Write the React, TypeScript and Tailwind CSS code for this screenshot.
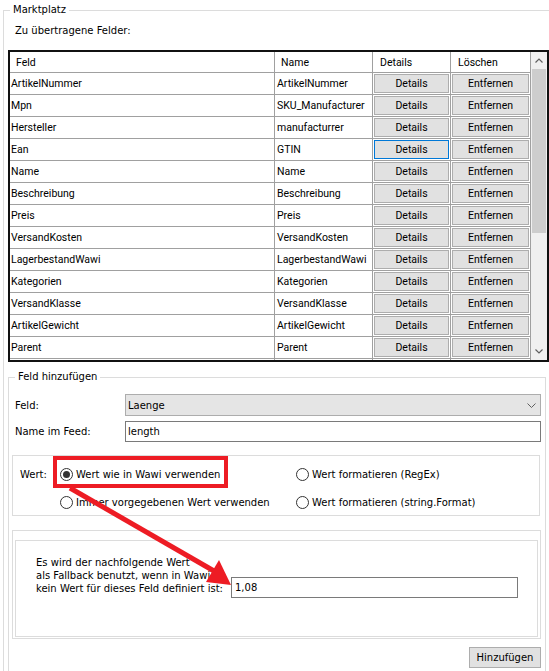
import React from 'react';

const rows: [string, string][] = [
    ['ArtikelNummer', 'ArtikelNummer'],
    ['Mpn', 'SKU_Manufacturer'],
    ['Hersteller', 'manufacturrer'],
    ['Ean', 'GTIN'],
    ['Name', 'Name'],
    ['Beschreibung', 'Beschreibung'],
    ['Preis', 'Preis'],
    ['VersandKosten', 'VersandKosten'],
    ['LagerbestandWawi', 'LagerbestandWawi'],
    ['Kategorien', 'Kategorien'],
    ['VersandKlasse', 'VersandKlasse'],
    ['ArtikelGewicht', 'ArtikelGewicht'],
    ['Parent', 'Parent'],
];

const Radio: React.FC<{ checked?: boolean; label: React.ReactNode }> = ({ checked, label }) => (
    <div className="flex items-center h-[16px]">
        <span className="w-[13px] h-[13px] rounded-full border border-[#333333] bg-white flex items-center justify-center shrink-0">
            {checked && <span className="w-[7px] h-[7px] rounded-full bg-[#333333]" />}
        </span>
        <span className="ml-[3px] whitespace-nowrap">{label}</span>
    </div>
);

const GridRow: React.FC<{ feld: string; name: string; focused?: boolean; empty?: boolean }> = ({
    feld,
    name,
    focused,
    empty,
}) => (
    <div className="flex h-[22px] border-b border-[#a0a0a0] shrink-0">
        <div className="w-[265px] border-r border-[#a0a0a0] pl-[1px] flex items-center">{feld}</div>
        <div className="w-[98px] border-r border-[#a0a0a0] pl-[2px] flex items-center whitespace-nowrap overflow-hidden">{name}</div>
        <div className="w-[78px] border-r border-[#a0a0a0] p-[1px]">
            <div
                className={`h-full flex items-center justify-center bg-[#e1e1e1] border ${
                    focused ? 'border-[#0078d7]' : 'border-[#adadad]'
                }`}
            >
                {!empty && 'Details'}
            </div>
        </div>
        <div className="w-[80px] border-r border-[#a0a0a0] p-[1px]">
            <div className="h-full flex items-center justify-center bg-[#e1e1e1] border border-[#adadad]">
                {!empty && 'Entfernen'}
            </div>
        </div>
    </div>
);

const App: React.FC = () => {
    return (
        <div className="relative w-[549px] h-[671px] overflow-hidden bg-white text-black font-['DejaVu_Sans',sans-serif] text-[10px] leading-[13px]">
            <fieldset className="ml-[3px] mt-[3px] w-[560px] h-[720px] border border-[#dcdcdc] min-w-0">
                <legend className="ml-[6px] px-[3px] leading-[14px]">Marktplatz</legend>

                <div className="pl-[11px] pt-[7px] leading-[14px]">Zu übertragene Felder:</div>

                {/* grid */}
                <div className="ml-[4px] mt-[12px] w-[541px] h-[312px] border-2 border-[#111111] flex overflow-hidden font-['Roboto',sans-serif] text-[10.5px]">
                    <div className="w-[521px] flex flex-col overflow-hidden">
                        <div className="flex h-[21px] border-b border-[#a0a0a0] shrink-0">
                            <div className="w-[265px] border-r border-[#a0a0a0] pl-[6px] flex items-center">Feld</div>
                            <div className="w-[98px] border-r border-[#a0a0a0] pl-[6px] flex items-center">Name</div>
                            <div className="w-[78px] border-r border-[#a0a0a0] pl-[7px] flex items-center">Details</div>
                            <div className="w-[80px] border-r border-[#a0a0a0] pl-[7px] flex items-center">Löschen</div>
                        </div>
                        {rows.map(([f, n], i) => (
                            <GridRow key={i} feld={f} name={n} focused={f === 'Ean'} />
                        ))}
                        <GridRow feld="" name="" empty />
                    </div>
                    <div className="w-[16px] bg-[#f0f0f0] flex flex-col">
                        <div className="h-[17px] flex items-center justify-center">
                            <svg width="8" height="5" viewBox="0 0 8 5">
                                <polyline points="0.5,4.5 4,1 7.5,4.5" fill="none" stroke="#606060" strokeWidth="1.2" />
                            </svg>
                        </div>
                        <div className="mx-[1px] h-[164px] bg-[#cdcdcd]" />
                        <div className="flex-1" />
                        <div className="h-[17px] flex items-center justify-center">
                            <svg width="8" height="5" viewBox="0 0 8 5">
                                <polyline points="0.5,0.5 4,4 7.5,0.5" fill="none" stroke="#606060" strokeWidth="1.2" />
                            </svg>
                        </div>
                    </div>
                </div>

                {/* Feld hinzufügen */}
                <fieldset className="ml-[4px] mt-[8px] w-[538px] h-[340px] border border-[#dcdcdc] min-w-0">
                    <legend className="ml-[6px] px-[3px] leading-[14px]">Feld hinzufügen</legend>

                    <div className="mt-[10px] flex items-center">
                        <div className="ml-[6px] w-[110px]">Feld:</div>
                        <div className="w-[416px] h-[22px] bg-[#e5e5e5] border border-[#adadad] flex items-center justify-between pl-[2px] pr-[4px]">
                            <span>Laenge</span>
                            <svg width="9" height="5" viewBox="0 0 9 5">
                                <polyline points="0.5,0.5 4.5,4.5 8.5,0.5" fill="none" stroke="#606060" strokeWidth="1" />
                            </svg>
                        </div>
                    </div>
                    <div className="mt-[5px] flex items-center">
                        <div className="ml-[6px] w-[110px]">Name im Feed:</div>
                        <div className="w-[416px] h-[21px] bg-white border border-[#7a7a7a] flex items-center pl-[2px]">length</div>
                    </div>

                    {/* Wert */}
                    <div className="ml-[3px] mt-[13px] w-[528px] h-[61px] border border-[#dcdcdc] flex pt-[10px]">
                        <div className="pl-[7px] w-[47px] h-[16px] flex items-center">Wert:</div>
                        <div className="grid grid-cols-[236px_auto] gap-y-[7px]">
                            <Radio checked label="Wert wie in Wawi verwenden" />
                            <Radio label="Wert formatieren (RegEx)" />
                            <Radio label="Immer vorgegebenen Wert verwenden" />
                            <Radio label="Wert formatieren (string.Format)" />
                        </div>
                    </div>

                    {/* Fallback */}
                    <div className="ml-[3px] mt-[14px] w-[529px] h-[109px] border border-[#dcdcdc]">
                        <div className="mx-[2px] mt-[9px] w-[523px] h-[97px] border border-[#dcdcdc] flex items-start pl-[20px] pt-[15px]">
                            <div className="w-[195px] whitespace-nowrap">
                                Es wird der nachfolgende Wert
                                <br />
                                als Fallback benutzt, wenn in Wawi
                                <br />
                                kein Wert für dieses Feld definiert ist:
                            </div>
                            <div className="mt-[21px] w-[287px] h-[21px] bg-white border border-[#7a7a7a] flex items-center pl-[3px]">1,08</div>
                        </div>
                    </div>

                    <div className="ml-[460px] mt-[8px] w-[72px] h-[21px] bg-[#e1e1e1] border border-[#adadad] flex items-center justify-center">
                        Hinzufügen
                    </div>
                </fieldset>
            </fieldset>

            {/* annotation */}
            <div className="absolute left-[53px] top-[456px] w-[175px] h-[32px] border-[4px] border-[#ed1c24]" />
            <svg className="absolute inset-0 pointer-events-none" width="549" height="671" viewBox="0 0 549 671">
                <line x1="70" y1="488" x2="214" y2="571" stroke="#ed1c24" strokeWidth="5" />
                <polygon points="231,585 206,582 219,560" fill="#ed1c24" />
            </svg>
        </div>
    );
};

export default App;
